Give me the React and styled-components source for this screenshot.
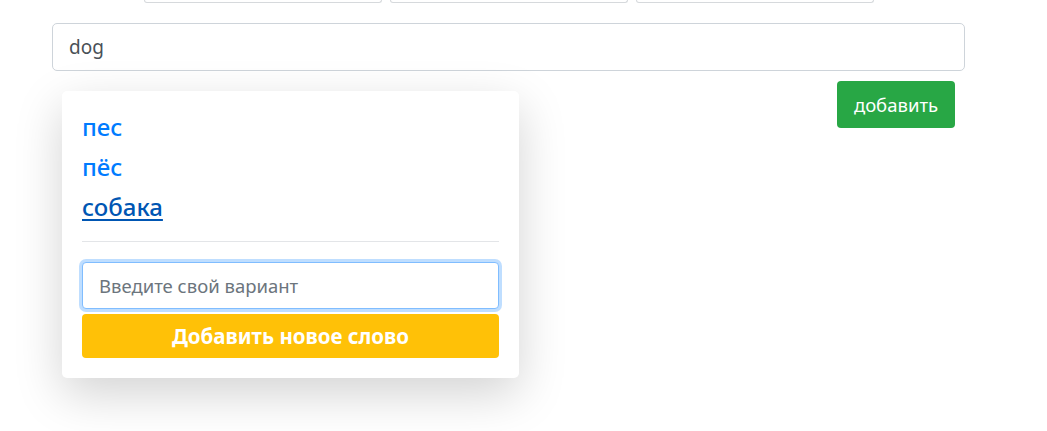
import React from 'react';
import styled, { createGlobalStyle } from 'styled-components';

const GlobalStyle = createGlobalStyle`
    html, body {
        margin: 0;
        padding: 0;
        background: #fff;
        font-family: "Noto Sans", "Open Sans", Arial, sans-serif;
        color: #212529;
    }
    * { box-sizing: border-box; }
`;

const Page = styled.div`
    width: 1047px;
    height: 431px;
    overflow: hidden;
    padding: 0 82px 0 52px;
`;

const Tabs = styled.div`
    display: flex;
    gap: 8px;
    padding-left: 92px;
    height: 3px;
`;

const Tab = styled.div`
    width: 238px;
    height: 3px;
    border: 1px solid #d6d9dc;
    border-top: none;
    border-radius: 0 0 5px 5px;
`;

const SearchWrap = styled.div`
    position: relative;
    margin-top: 20px;
`;

const SearchInput = styled.input`
    display: block;
    width: 913px;
    height: 48px;
    padding: 0 16px;
    font-family: inherit;
    font-size: 19px;
    color: #495057;
    border: 1px solid #ced4da;
    border-radius: 5px;
    outline: none;
    background: #fff;
`;

const Actions = styled.div`
    display: flex;
    justify-content: flex-end;
    width: 903px;
    margin-top: 10px;
`;

const AddButton = styled.button`
    height: 47px;
    width: 118px;
    padding: 0;
    border: none;
    border-radius: 4px;
    background: #28a745;
    color: #fff;
    font-family: inherit;
    font-size: 18.5px;
`;

const Dropdown = styled.div`
    position: absolute;
    left: 10px;
    top: 68px;
    width: 457px;
    height: 287px;
    background: #fff;
    border-radius: 5px;
    box-shadow: 0 1rem 3rem rgba(0, 0, 0, .175);
    padding: 16px 20px 20px;
    display: flex;
    flex-direction: column;
`;

const Options = styled.ul`
    list-style: none;
    margin: 0;
    padding: 0;
`;

const Option = styled.li`
    height: 40px;
    line-height: 40px;
    font-size: 24px;
    font-weight: 500;

    a {
        color: ${props => props.hover ? '#0056b3' : '#007bff'};
        text-decoration: ${props => props.hover ? 'underline' : 'none'};
        text-underline-offset: 3px;
        text-decoration-thickness: 2px;
    }
`;

const Divider = styled.hr`
    margin: 14px 0 20px;
    border: none;
    border-top: 1px solid #e3e5e8;
`;

const OwnInput = styled.input`
    display: block;
    width: 100%;
    height: 47px;
    padding: 0 16px;
    font-family: inherit;
    font-size: 18.5px;
    color: #495057;
    border: 1px solid #80bdff;
    border-radius: 4px;
    outline: none;
    box-shadow: 0 0 0 3px rgba(0, 123, 255, .25);

    &::placeholder {
        color: #6c757d;
    }
`;

const NewWordButton = styled.button`
    margin-top: 5px;
    width: 100%;
    height: 44px;
    border: none;
    border-radius: 4px;
    background: #ffc107;
    color: #fff;
    font-family: inherit;
    font-weight: 700;
    font-size: 20.5px;
`;

const variants = [
    { word: 'пес' },
    { word: 'пёс' },
    { word: 'собака', hover: true },
];

export default function App() {
    return (
        <Page>
            <GlobalStyle />
            <Tabs>
                <Tab />
                <Tab />
                <Tab />
            </Tabs>
            <SearchWrap>
                <SearchInput defaultValue="dog" />
                <Actions>
                    <AddButton>добавить</AddButton>
                </Actions>
                <Dropdown>
                    <Options>
                        {variants.map((v, i) => (
                            <Option key={i} hover={v.hover}>
                                <a href="#">{v.word}</a>
                            </Option>
                        ))}
                    </Options>
                    <Divider />
                    <OwnInput placeholder="Введите свой вариант" />
                    <NewWordButton>Добавить новое слово</NewWordButton>
                </Dropdown>
            </SearchWrap>
        </Page>
    );
}
